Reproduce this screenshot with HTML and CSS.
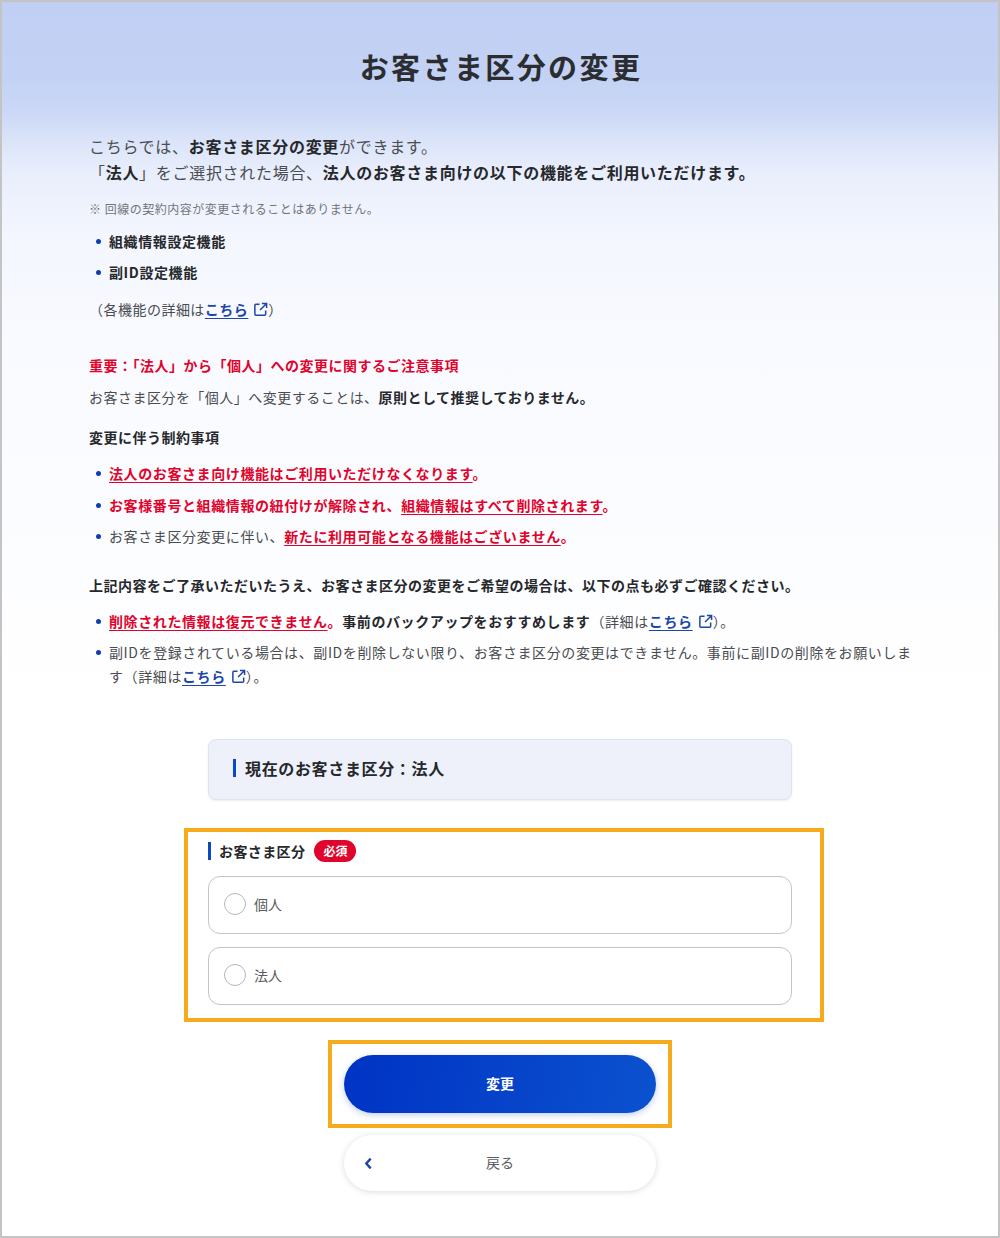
FILE: index.html
```html
<!DOCTYPE html>
<html lang="ja">
<head>
<meta charset="utf-8">
<title>お客さま区分の変更</title>
<link rel="stylesheet" href="styles.css">
</head>
<body>
<main class="page">
  <h1 class="title">お客さま区分の変更</h1>
  <section class="intro">
    <p>こちらでは、<b>お客さま区分の変更</b>ができます。</p>
    <p>「<b>法人</b>」をご選択された場合、<b>法人のお客さま向けの以下の機能をご利用いただけます。</b></p>
  </section>
  <p class="note">※ 回線の契約内容が変更されることはありません。</p>
  <ul class="list list-a">
    <li><b>組織情報設定機能</b></li>
    <li><b>副ID設定機能</b></li>
  </ul>
  <p class="text detail">（各機能の詳細は<a class="link" href="#">こちら</a><svg class="ext" viewBox="0 0 16 16"><path d="M7 2.500H3a1 1 0 0 0-1 1V13a1 1 0 0 0 1 1h9.500a1 1 0 0 0 1-1V9M9.500 1.500h5v5M14.500 1.500 7.500 8.500"/></svg>）</p>

  <h2 class="alert-head">重要：「法人」から「個人」への変更に関するご注意事項</h2>
  <p class="text rec">お客さま区分を「個人」へ変更することは、<b>原則として推奨しておりません。</b></p>
  <h3 class="sub">変更に伴う制約事項</h3>
  <ul class="list list-b">
    <li><b class="red"><u>法人のお客さま向け機能はご利用いただけなくなります</u>。</b></li>
    <li><b class="red">お客様番号と組織情報の紐付けが解除され、<u>組織情報はすべて削除されます</u>。</b></li>
    <li>お客さま区分変更に伴い、<b class="red"><u>新たに利用可能となる機能はございません</u>。</b></li>
  </ul>
  <h3 class="sub sub-b">上記内容をご了承いただいたうえ、お客さま区分の変更をご希望の場合は、以下の点も必ずご確認ください。</h3>
  <ul class="list list-c">
    <li><b class="red"><u>削除された情報は復元できません</u>。</b><b>事前のバックアップをおすすめします</b>（詳細は<a class="link" href="#">こちら</a><svg class="ext" viewBox="0 0 16 16"><path d="M7 2.500H3a1 1 0 0 0-1 1V13a1 1 0 0 0 1 1h9.500a1 1 0 0 0 1-1V9M9.500 1.500h5v5M14.500 1.500 7.500 8.500"/></svg>）。</li>
    <li>副IDを登録されている場合は、副IDを削除しない限り、お客さま区分の変更はできません。事前に副IDの削除をお願いします（詳細は<a class="link" href="#">こちら</a><svg class="ext" viewBox="0 0 16 16"><path d="M7 2.500H3a1 1 0 0 0-1 1V13a1 1 0 0 0 1 1h9.500a1 1 0 0 0 1-1V9M9.500 1.500h5v5M14.500 1.500 7.500 8.500"/></svg>）。</li>
  </ul>

  <div class="current"><span class="current-text">現在のお客さま区分：法人</span></div>

  <div class="highlight form-box">
    <div class="label-row"><span class="label">お客さま区分</span><span class="req">必須</span></div>
    <label class="radio"><span class="dot"></span>個人</label>
    <label class="radio"><span class="dot"></span>法人</label>
  </div>

  <div class="highlight btn-box">
    <button class="btn primary" type="button">変更</button>
  </div>
  <button class="btn back" type="button"><svg class="chev" viewBox="0 0 8 12"><path d="M6 1.500 2 6l4 4.500"/></svg>戻る</button>
</main>
</body>
</html>
```
FILE: styles.css
```css
* { box-sizing: border-box; }
html, body { margin: 0; padding: 0; }
body {
  width: 1000px;
  height: 1238px;
  font-family: "Noto Sans CJK JP", "Noto Sans", sans-serif;
  color: #4a4c50;
  background: #fff;
}
.page {
  height: 1238px;
  border: 2px solid #c4c4c4;
  padding: 0 85px 0 87px;
  overflow: hidden;
  background: linear-gradient(180deg, #c0cff3 0, #c2d1f4 70px, #cbd8f6 110px, #dbe4f9 140px, #e9eefc 170px, #f3f6fe 230px, #f8faff 330px, #fbfcff 500px, #fff 700px);
}
p, h1, h2, h3, ul { margin: 0; padding: 0; }
b { font-weight: 700; color: #26282c; }
.title {
  margin-top: 42px;
  font-size: 29px;
  line-height: 44px;
  font-weight: 700;
  letter-spacing: 2.400px;
  text-align: center;
  color: #2b2d31;
}
.intro { margin-top: 45px; font-size: 16px; line-height: 26px; letter-spacing: 0.700px; }
.note { margin-top: 15px; font-size: 12px; line-height: 18px; letter-spacing: 0.500px; color: #71747a; }
.text { font-size: 14px; line-height: 24px; letter-spacing: 0.480px; }
.list { list-style: none; font-size: 14px; letter-spacing: 0.600px; }
.list li { position: relative; padding-left: 20px; line-height: 24px; margin-top: 7px; }
.list li::before {
  content: "";
  position: absolute;
  left: 7px;
  top: 10px;
  width: 5px;
  height: 5px;
  border-radius: 50%;
  background: #0e3eb0;
}
.list-a { margin-top: 11px; }
.detail { margin-top: 13px; }
.link { color: #1c47a8; font-weight: 700; text-decoration: underline; text-underline-offset: 3px; }
.ext { width: 15px; height: 15px; margin-left: 5px; vertical-align: -2px; fill: none; stroke: #1c47a8; stroke-width: 1.600; }
.alert-head { margin-top: 32px; font-size: 14px; line-height: 24px; font-weight: 700; letter-spacing: 0.500px; color: #e0042d; }
.rec { margin-top: 8px; }
.sub { margin-top: 16px; font-size: 14px; line-height: 24px; font-weight: 700; letter-spacing: 0.500px; color: #26282c; }
.sub-b { margin-top: 25px; }
.list-b { margin-top: 12px; }
.list-b li { margin-top: 7.500px; }
.list-c { margin-top: 12px; }
.red { color: #e0042d; }
.red u { text-underline-offset: 3px; }
.current {
  display: flex;
  align-items: center;
  width: 584px;
  height: 61px;
  margin: 51px 0 0 119px;
  padding: 0 0 4px 24px;
  border: 1px solid #e0e4ef;
  border-radius: 8px;
  background: #eef1fa;
  box-shadow: 0 1px 2px rgba(0, 20, 80, .08);
}
.current-text {
  border-left: 3px solid #0b49c4;
  padding-left: 9px;
  font-size: 16px;
  line-height: 18px;
  font-weight: 700;
  letter-spacing: 0.650px;
  color: #26282c;
}
.highlight { border: 4px solid #f5ab1c; background: #fff; }
.form-box { width: 640px; height: 194px; margin: 28px 0 0 95px; padding: 7px 28px 0 20px; }
.label-row { display: flex; align-items: center; height: 24px; }
.label {
  border-left: 3px solid #0b49c4;
  padding-left: 8px;
  font-size: 14px;
  line-height: 18px;
  font-weight: 700;
  letter-spacing: 0.400px;
  color: #26282c;
}
.req {
  margin-left: 9px;
  width: 42px;
  height: 22px;
  border-radius: 11px;
  background: #e0042d;
  color: #fff;
  font-size: 12px;
  line-height: 22px;
  font-weight: 700;
  text-align: center;
}
.radio {
  display: flex;
  align-items: center;
  height: 58px;
  margin-top: 13px;
  padding: 0 0 2px 15px;
  border: 1px solid #c3c5cc;
  border-radius: 12px;
  background: #fff;
  font-size: 14px;
  color: #5a5c60;
}
.dot { width: 22px; height: 22px; margin-right: 8px; border: 1px solid #b5b7bd; border-radius: 50%; background: #fff; }
.btn-box { display: flex; justify-content: center; align-items: center; width: 344px; height: 88px; margin: 18px 0 0 239px; }
.btn { display: block; width: 312px; padding: 0 0 3px; border: 0; border-radius: 29px; font-family: inherit; font-size: 14px; }
.primary {
  height: 58px;
  background: linear-gradient(100deg, #0033c4, #0b52cf);
  color: #fff;
  font-weight: 700;
  box-shadow: 0 2px 6px rgba(11, 60, 200, .25);
}
.back {
  position: relative;
  height: 56px;
  margin: 7px 0 0 255px;
  background: #fff;
  color: #5a5c60;
  box-shadow: 0 1px 6px rgba(0, 0, 0, .14);
}
.chev { position: absolute; left: 20px; top: 22px; width: 9px; height: 13px; fill: none; stroke: #1c47a8; stroke-width: 2.200; }
```
